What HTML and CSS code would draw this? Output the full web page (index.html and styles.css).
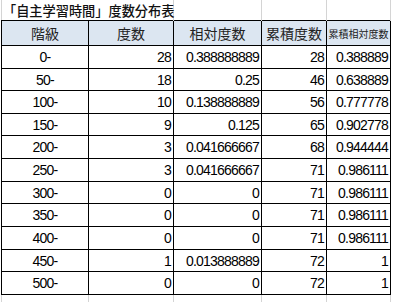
FILE: index.html
```html
<!DOCTYPE html>
<html lang="ja">
<head>
<meta charset="utf-8">
<link rel="stylesheet" href="styles.css">
</head>
<body>
<div class="sheet">
  <div class="cols title-row">
    <div class="title">「自主学習時間」度数分布表</div>
    <div class="gl"></div>
    <div class="gl"></div>
    <div class="gl"></div>
  </div>
  <div class="cols table">
    <div class="c h">階級</div>
    <div class="c h">度数</div>
    <div class="c h">相対度数</div>
    <div class="c h">累積度数</div>
    <div class="c h small">累積相対度数</div>

    <div class="c k">0-</div><div class="c n">28</div><div class="c n">0.388888889</div><div class="c n">28</div><div class="c n">0.388889</div>
    <div class="c k">50-</div><div class="c n">18</div><div class="c n">0.25</div><div class="c n">46</div><div class="c n">0.638889</div>
    <div class="c k">100-</div><div class="c n">10</div><div class="c n">0.138888889</div><div class="c n">56</div><div class="c n">0.777778</div>
    <div class="c k">150-</div><div class="c n">9</div><div class="c n">0.125</div><div class="c n">65</div><div class="c n">0.902778</div>
    <div class="c k">200-</div><div class="c n">3</div><div class="c n">0.041666667</div><div class="c n">68</div><div class="c n">0.944444</div>
    <div class="c k">250-</div><div class="c n">3</div><div class="c n">0.041666667</div><div class="c n">71</div><div class="c n">0.986111</div>
    <div class="c k">300-</div><div class="c n">0</div><div class="c n">0</div><div class="c n">71</div><div class="c n">0.986111</div>
    <div class="c k">350-</div><div class="c n">0</div><div class="c n">0</div><div class="c n">71</div><div class="c n">0.986111</div>
    <div class="c k">400-</div><div class="c n">0</div><div class="c n">0</div><div class="c n">71</div><div class="c n">0.986111</div>
    <div class="c k">450-</div><div class="c n">1</div><div class="c n">0.013888889</div><div class="c n">72</div><div class="c n">1</div>
    <div class="c k">500-</div><div class="c n">0</div><div class="c n">0</div><div class="c n">72</div><div class="c n">1</div>
  </div>
  <div class="cols tail-row">
    <div class="gl"></div><div class="gl"></div><div class="gl"></div><div class="gl"></div><div class="gl"></div>
  </div>
</div>
</body>
</html>
```

FILE: styles.css
```css
html, body {
  margin: 0;
  padding: 0;
  background: #ffffff;
}

.sheet {
  padding-left: 1px;
  font-family: "Liberation Sans", "Noto Sans CJK JP", sans-serif;
  color: #000;
}

.cols {
  display: grid;
  grid-template-columns: 87px 85px 88px 65px 64px;
  width: 390px;
  box-sizing: border-box;
}

.title-row {
  height: 20px;
  border-left: 1px solid #d4d4d4;
}

.title {
  grid-column: span 2;
  border-right: 1px solid #d4d4d4;
  font-family: "Noto Sans CJK JP", sans-serif;
  font-size: 13.2px;
  font-weight: 500;
  line-height: 21px;
  padding-left: 1px;
  white-space: nowrap;
  color: #111;
}

.gl {
  border-right: 1px solid #d4d4d4;
}

.table {
  border-top: 1px solid #000;
  border-left: 1px solid #000;
  grid-template-rows: 25px 23px 22px 23px 22px 23px 23px 22px 23px 23px 22px 23px;
}

.c {
  box-sizing: border-box;
  border-right: 1px solid #000;
  border-bottom: 1px solid #000;
  display: flex;
  align-items: center;
  font-size: 14px;
  letter-spacing: -0.8px;
  white-space: nowrap;
  overflow: hidden;
}

.h {
  background: #dce6f1;
  justify-content: center;
  font-family: "Noto Sans CJK JP", sans-serif;
  font-size: 14px;
  letter-spacing: 0;
  color: #222;
}

.h.small {
  font-size: 10px;
}

.k {
  justify-content: center;
}

.n {
  justify-content: flex-end;
  padding-right: 2px;
}

.tail-row {
  height: 8px;
  border-left: 1px solid #d4d4d4;
}
```
